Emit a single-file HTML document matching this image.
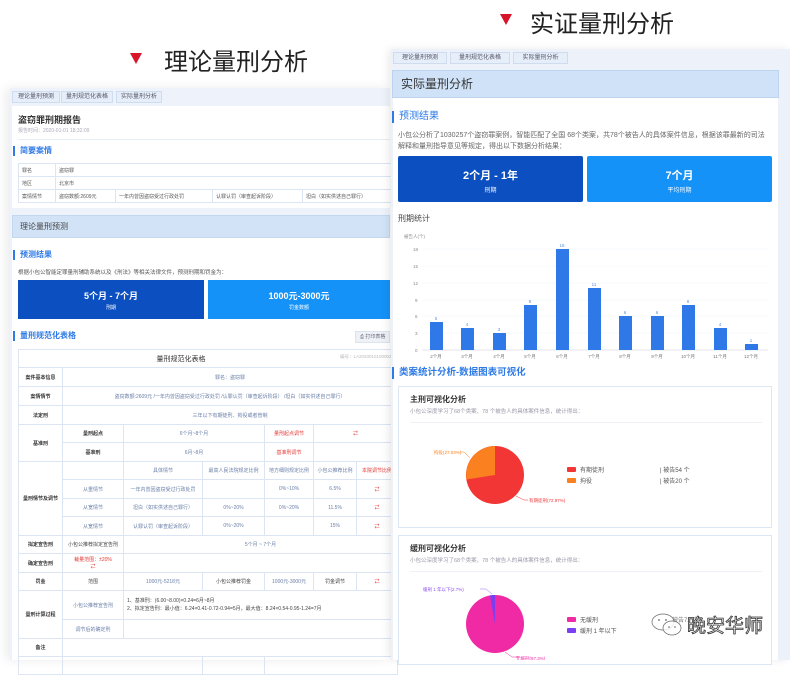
<!DOCTYPE html>
<html><head><meta charset="utf-8">
<style>
*{margin:0;padding:0;box-sizing:border-box}
body{width:790px;height:660px;overflow:hidden;background:#fff;position:relative;font-family:"Liberation Sans","Noto Sans CJK SC",sans-serif;color:#333}
.a{position:absolute;white-space:nowrap}
.tri{position:absolute;width:0;height:0;border-left:6px solid transparent;border-right:6px solid transparent;border-top:11px solid #d8142b}
.tab{position:absolute;height:12px;border:1px solid #cfdcef;background:#e6eef9;font-size:6px;line-height:10px;text-align:center;color:#556}
.sec{position:absolute;font-size:9px;color:#2e7ae6;font-weight:bold;padding-left:5px;border-left:2px solid #2e7ae6;line-height:10px}
table{border-collapse:collapse;position:absolute}
td{border:1px solid #dbe5f3;font-size:5px;color:#555;padding:0 3px}
.t2 td{text-align:center;color:#6a7fa8}
.t2 td.h{color:#333;font-weight:bold}
.r{color:#e53935!important}
</style></head><body>

<div class="tri" style="left:130px;top:53px"></div>
<div class="a" style="left:164px;top:42px;font-size:24px;color:#222">理论量刑分析</div>
<div class="tri" style="left:500px;top:14px"></div>
<div class="a" style="left:530px;top:4px;font-size:24px;color:#222">实证量刑分析</div>

<div class="a" style="left:10px;top:88px;width:380px;height:572px;background:#eef3fb;box-shadow:-4px 0 10px rgba(0,0,0,.08)"></div>
<div class="tab" style="left:12px;top:91px;width:48px">理论量刑预测</div>
<div class="tab" style="left:61px;top:91px;width:52px">量刑规范化表格</div>
<div class="tab" style="left:116px;top:91px;width:46px">实际量刑分析</div>
<div class="a" style="left:12px;top:106px;width:378px;height:102px;background:#fff"></div>
<div class="a" style="left:18px;top:113px;font-size:9px;font-weight:bold;color:#333">盗窃罪刑期报告</div>
<div class="a" style="left:18px;top:127px;font-size:5px;color:#aab">报告时间：2020-01-01 18:32:09</div>
<div class="a" style="left:18px;top:139px;width:372px;height:1px;background:#e8edf4"></div>
<div class="sec" style="left:13px;top:146px;font-size:8px">简要案情</div>
<table style="left:18px;top:163px;width:380px">
<tr style="height:13px"><td style="width:37px">罪名</td><td colspan="4">盗窃罪</td></tr>
<tr style="height:13px"><td>地区</td><td colspan="4">北京市</td></tr>
<tr style="height:13px"><td>案情情节</td><td style="width:60px">盗窃数额:2609元</td><td style="width:97px">一年内曾因盗窃受过行政处罚</td><td style="width:90px">认罪认罚（审查起诉阶段）</td><td>坦白（如实供述自己罪行）</td></tr>
</table>
<div class="a" style="left:12px;top:215px;width:378px;height:23px;background:#d2e3f7;border:1px solid #c3d7f0;font-size:8px;line-height:21px;padding-left:7px;color:#444">理论量刑预测</div>
<div class="a" style="left:12px;top:238px;width:378px;height:422px;background:#fff"></div>
<div class="sec" style="left:13px;top:250px;font-size:8px">预测结果</div>
<div class="a" style="left:18px;top:268px;font-size:5.5px;color:#555">根据小包公智能定罪量刑辅助系统以及《刑法》等相关法律文件，预测刑期和罚金为：</div>
<div class="a" style="left:18px;top:280px;width:186px;height:39px;background:#0b4fc0;color:#fff;text-align:center"><div style="font-size:9px;font-weight:bold;margin-top:9px">5个月 - 7个月</div><div style="font-size:5px;margin-top:2px">刑期</div></div>
<div class="a" style="left:208px;top:280px;width:182px;height:39px;background:#1592f7;color:#fff;text-align:center"><div style="font-size:9px;font-weight:bold;margin-top:9px">1000元-3000元</div><div style="font-size:5px;margin-top:2px">罚金数额</div></div>
<div class="sec" style="left:13px;top:331px;font-size:8px">量刑规范化表格</div>
<div class="a" style="left:355px;top:331px;width:35px;height:12px;background:#eef2f7;border:1px solid #dde4ee;font-size:5px;line-height:10px;padding-left:4px;color:#667">⎙ 打印表格</div>

<table class="t2" style="left:18px;top:349px;width:380px">
<tr style="height:18px"><td colspan="7" style="font-size:7px;color:#333">量刑规范化表格<span style="float:right;font-size:4.5px;color:#bbb">编号：LA20200101000021</span></td></tr>
<tr style="height:19px"><td class="h" style="width:44px">案件基本信息</td><td colspan="6">罪名：盗窃罪</td></tr>
<tr style="height:19px"><td class="h">案情情节</td><td colspan="6">盗窃数额:2609元 /一年内曾因盗窃受过行政处罚 /认罪认罚（审查起诉阶段） /坦白（如实供述自己罪行）</td></tr>
<tr style="height:19px"><td class="h">法定刑</td><td colspan="6">三年以下有期徒刑、拘役或者管制</td></tr>
<tr style="height:18px"><td class="h" rowspan="2">基准刑</td><td class="h" style="width:61px">量刑起点</td><td colspan="2">6个月~8个月</td><td class="r" style="width:49px">量刑起点调节</td><td colspan="2" class="r">⇄</td></tr>
<tr style="height:19px"><td class="h">基准刑</td><td colspan="2">6月~8月</td><td class="r">基准刑调节</td><td colspan="2"></td></tr>
<tr style="height:18px"><td class="h" rowspan="4">量刑情节及调节</td><td></td><td style="width:79px">具体情节</td><td style="width:62px">最高人民法院规定比例</td><td>地方细则规定比例</td><td style="width:43px">小包公推荐比例</td><td class="r">本院调节比例</td></tr>
<tr style="height:19px"><td>从重情节</td><td>一年内曾因盗窃受过行政处罚</td><td></td><td>0%~10%</td><td>6.5%</td><td class="r">⇄</td></tr>
<tr style="height:18px"><td>从宽情节</td><td>坦白（如实供述自己罪行）</td><td>0%~20%</td><td>0%~20%</td><td>11.5%</td><td class="r">⇄</td></tr>
<tr style="height:19px"><td>从宽情节</td><td>认罪认罚（审查起诉阶段）</td><td>0%~20%</td><td></td><td>15%</td><td class="r">⇄</td></tr>
<tr style="height:18px"><td class="h">拟定宣告刑</td><td style="color:#444">小包公推荐拟定宣告刑</td><td colspan="5">5个月 ~ 7个月</td></tr>
<tr style="height:19px"><td class="h">确定宣告刑</td><td class="r">裁量范围：±20%<br>⇄</td><td colspan="5"></td></tr>
<tr style="height:18px"><td class="h">罚金</td><td style="color:#444">范围</td><td>1000元-5218元</td><td style="color:#444">小包公推荐罚金</td><td>1000元-3000元</td><td style="color:#444">罚金调节</td><td class="r">⇄</td></tr>
<tr style="height:29px"><td class="h" rowspan="2">量刑计算过程</td><td>小包公推荐宣告刑</td><td colspan="5" style="text-align:left;color:#444;line-height:8px">1、基准刑：(6.00~8.00)×0.24=6月~8月<br>2、拟定宣告刑：最小值：6.24×0.41-0.72-0.94=5月，最大值：8.24×0.54-0.95-1.24=7月</td></tr>
<tr style="height:19px"><td>调节后的确定刑</td><td colspan="5"></td></tr>
<tr style="height:18px"><td class="h">备注</td><td colspan="6"></td></tr>
<tr style="height:18px"><td></td><td colspan="2"></td><td></td><td colspan="3"></td></tr>
</table>

<div class="a" style="left:391px;top:49px;width:399px;height:611px;background:#edf2fa;box-shadow:-3px 0 8px rgba(0,0,0,.08)"></div>
<div class="tab" style="left:393px;top:52px;width:54px">理论量刑预测</div>
<div class="tab" style="left:450px;top:52px;width:60px">量刑规范化表格</div>
<div class="tab" style="left:513px;top:52px;width:55px">实际量刑分析</div>
<div class="a" style="left:392px;top:70px;width:387px;height:28px;background:#cfe2f7;border:1px solid #bcd4f0;font-size:12px;line-height:26px;padding-left:8px;color:#333">实际量刑分析</div>
<div class="a" style="left:393px;top:98px;width:385px;height:562px;background:#fff"></div>
<div class="sec" style="left:392px;top:111px;font-weight:normal;font-size:10px;line-height:12px">预测结果</div>
<div class="a" style="left:398px;top:130px;font-size:7px;color:#666;line-height:11px">小包公分析了1030257个盗窃罪案例，智能匹配了全国 68个类案，共78个被告人的具体案件信息，根据该罪最新的司法<br>解释和量刑指导意见等规定，得出以下数据分析结果：</div>
<div class="a" style="left:398px;top:156px;width:185px;height:46px;background:#0b4fc0;color:#fff;text-align:center;border-radius:2px"><div style="font-size:11px;font-weight:bold;margin-top:11px">2个月 - 1年</div><div style="font-size:6px;margin-top:2px">刑期</div></div>
<div class="a" style="left:587px;top:156px;width:185px;height:46px;background:#1592f7;color:#fff;text-align:center;border-radius:2px"><div style="font-size:11px;font-weight:bold;margin-top:11px">7个月</div><div style="font-size:6px;margin-top:2px">平均刑期</div></div>
<div class="a" style="left:398px;top:213px;font-size:8px;color:#444">刑期统计</div>

<svg class="a" style="left:393px;top:228px" width="385" height="135" viewBox="393 228 385 135">
<g font-family="Liberation Sans" font-size="4.5" fill="#888">
<text x="404" y="238">被告人(个)</text>
<g stroke="#eef2f8" stroke-width="0.6">
<line x1="422" y1="249" x2="768" y2="249"/><line x1="422" y1="266" x2="768" y2="266"/><line x1="422" y1="283" x2="768" y2="283"/><line x1="422" y1="300" x2="768" y2="300"/><line x1="422" y1="316" x2="768" y2="316"/><line x1="422" y1="333" x2="768" y2="333"/></g>
<line x1="422" y1="350" x2="768" y2="350" stroke="#ccd" stroke-width="0.6"/>
<text x="413" y="251">18</text><text x="413" y="268">15</text><text x="413" y="285">12</text><text x="415" y="302">9</text><text x="415" y="318">6</text><text x="415" y="335">3</text><text x="415" y="352">0</text>
</g>
<g fill="#2f78e8">
<rect x="430" y="322" width="13" height="28"/><rect x="461" y="328" width="13" height="22"/><rect x="493" y="333" width="13" height="17"/><rect x="524" y="305" width="13" height="45"/><rect x="556" y="249" width="13" height="101"/><rect x="588" y="288" width="13" height="62"/><rect x="619" y="316" width="13" height="34"/><rect x="651" y="316" width="13" height="34"/><rect x="682" y="305" width="13" height="45"/><rect x="714" y="328" width="13" height="22"/><rect x="745" y="344" width="13" height="6"/>
</g>
<g font-family="Liberation Sans" font-size="4.5" fill="#5a8fe0" text-anchor="middle">
<text x="436" y="320">5</text><text x="467" y="326">4</text><text x="499" y="331">3</text><text x="530" y="303">8</text><text x="562" y="247">18</text><text x="594" y="286">11</text><text x="625" y="314">6</text><text x="657" y="314">6</text><text x="688" y="303">8</text><text x="720" y="326">4</text><text x="751" y="342">1</text>
</g>
<g font-family="Liberation Sans,Noto Sans CJK SC" font-size="4.5" fill="#777" text-anchor="middle">
<text x="436" y="358">2个月</text><text x="467" y="358">3个月</text><text x="499" y="358">4个月</text><text x="530" y="358">5个月</text><text x="562" y="358">6个月</text><text x="594" y="358">7个月</text><text x="625" y="358">8个月</text><text x="657" y="358">9个月</text><text x="688" y="358">10个月</text><text x="720" y="358">11个月</text><text x="751" y="358">12个月</text>
</g>
</svg>

<div class="sec" style="left:392px;top:367px;font-size:9.5px;line-height:12px">类案统计分析-数据图表可视化</div>

<div class="a" style="left:398px;top:386px;width:374px;height:142px;border:1px solid #dce7f5;background:#fff"></div>
<div class="a" style="left:410px;top:394px;font-size:8px;font-weight:bold;color:#333">主刑可视化分析</div>
<div class="a" style="left:410px;top:407px;font-size:5.5px;color:#99a">小包公深度学习了68个类案、78 个被告人的具体案件信息，统计得出：</div>
<div class="a" style="left:410px;top:422px;width:352px;height:1px;background:#eef1f6"></div>
<svg class="a" style="left:398px;top:430px" width="260" height="100" viewBox="398 430 260 100">
<circle cx="495" cy="475" r="29" fill="#f23535"/>
<path d="M495 475 L495 446 A29 29 0 0 0 466.5 479.5 Z" fill="#fb8020"/>
<polyline points="470,458 464,452 460,452" fill="none" stroke="#fb8020" stroke-width="0.5"/>
<text x="434" y="454" font-size="4.5" fill="#fb8020" font-family="Liberation Sans,Noto Sans CJK SC">拘役(27.03%)</text>
<polyline points="516,496 524,500 528,500" fill="none" stroke="#f23535" stroke-width="0.5"/>
<text x="529" y="502" font-size="4.5" fill="#f23535" font-family="Liberation Sans,Noto Sans CJK SC">有期徒刑(72.97%)</text>
</svg>
<div class="a" style="left:567px;top:467px;width:9px;height:5px;background:#f23535;border-radius:1px"></div>
<div class="a" style="left:580px;top:465px;font-size:6px;color:#555">有期徒刑</div>
<div class="a" style="left:567px;top:478px;width:9px;height:5px;background:#fb8020;border-radius:1px"></div>
<div class="a" style="left:580px;top:476px;font-size:6px;color:#555">拘役</div>
<div class="a" style="left:660px;top:465px;font-size:6px;color:#555">| 被告54 个</div>
<div class="a" style="left:660px;top:476px;font-size:6px;color:#555">| 被告20 个</div>

<div class="a" style="left:398px;top:535px;width:374px;height:130px;border:1px solid #dce7f5;background:#fff"></div>
<div class="a" style="left:410px;top:543px;font-size:8px;font-weight:bold;color:#333">缓刑可视化分析</div>
<div class="a" style="left:410px;top:556px;font-size:5.5px;color:#99a">小包公深度学习了68个类案、78 个被告人的具体案件信息，统计得出：</div>
<div class="a" style="left:410px;top:571px;width:352px;height:1px;background:#eef1f6"></div>
<svg class="a" style="left:398px;top:578px" width="260" height="82" viewBox="398 578 260 82">
<circle cx="495" cy="624" r="29" fill="#f02aa5"/>
<path d="M495 624 L495 595 A29 29 0 0 0 490 595.4 Z" fill="#7b3ef0"/>
<polyline points="492,594 486,589 480,589" fill="none" stroke="#9b6ef0" stroke-width="0.5"/>
<text x="423" y="591" font-size="4.5" fill="#8b4ef0" font-family="Liberation Sans,Noto Sans CJK SC">缓刑 1 年以下(2.7%)</text>
<polyline points="505,652 512,657 518,657" fill="none" stroke="#f02aa5" stroke-width="0.5"/>
<text x="516" y="660" font-size="4.5" fill="#f02aa5" font-family="Liberation Sans,Noto Sans CJK SC">无缓刑(97.3%)</text>
</svg>
<div class="a" style="left:567px;top:617px;width:9px;height:5px;background:#f02aa5;border-radius:1px"></div>
<div class="a" style="left:580px;top:615px;font-size:6px;color:#555">无缓刑</div>
<div class="a" style="left:567px;top:628px;width:9px;height:5px;background:#7b3ef0;border-radius:1px"></div>
<div class="a" style="left:580px;top:626px;font-size:6px;color:#555">缓刑 1 年以下</div>
<div class="a" style="left:672px;top:615px;font-size:6px;color:#777">被告72 个</div>

<svg class="a" style="left:650px;top:612px" width="36" height="26" viewBox="0 0 36 26">
<ellipse cx="13" cy="10" rx="11" ry="8" fill="rgba(255,255,255,.7)" stroke="#666" stroke-width="0.7"/>
<ellipse cx="22" cy="16" rx="9" ry="7" fill="rgba(255,255,255,.8)" stroke="#666" stroke-width="0.7"/>
<circle cx="9" cy="8" r="0.9" fill="#666"/><circle cx="16" cy="8" r="0.9" fill="#666"/>
<circle cx="19" cy="15" r="0.8" fill="#666"/><circle cx="25" cy="15" r="0.8" fill="#666"/>
</svg>
<div class="a" style="left:687px;top:611px;font-size:19px;color:#fff;-webkit-text-stroke:0.8px #333">晚安华师</div>

</body></html>
